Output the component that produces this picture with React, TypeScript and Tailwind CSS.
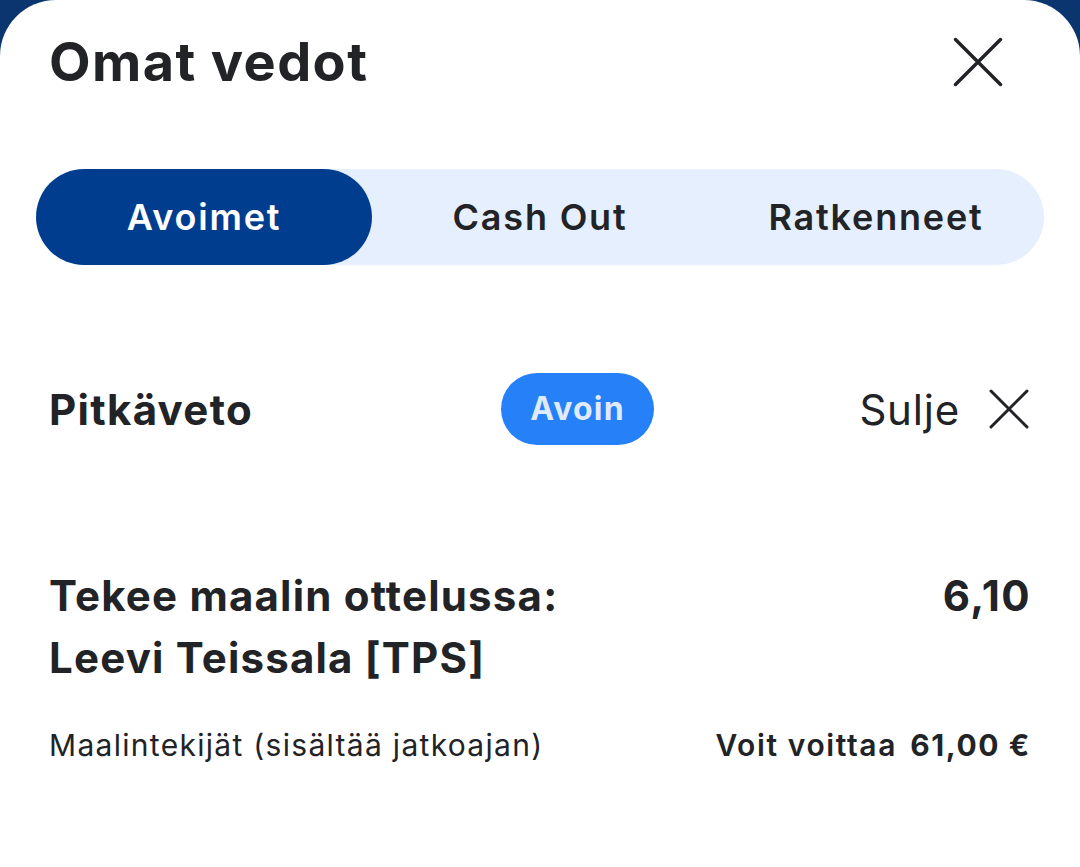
const tabs = ["Avoimet", "Cash Out", "Ratkenneet"];

const CloseIcon = ({ size, stroke }: { size: number; stroke: number }) => (
  <svg width={size} height={size} viewBox={`0 0 ${size} ${size}`} fill="none">
    <path
      d={`M${stroke} ${stroke}L${size - stroke} ${size - stroke}M${size - stroke} ${stroke}L${stroke} ${size - stroke}`}
      stroke="#222327"
      strokeWidth={stroke}
      strokeLinecap="round"
    />
  </svg>
);

const BetSheet = () => {
  return (
    <div className="min-h-[867px] w-[1080px] bg-[#0b356f] font-['Inter',sans-serif] text-[#222327]">
      <div className="min-h-[867px] rounded-t-[56px] bg-white">
        {/* header */}
        <div className="flex items-center justify-between pl-[49px] pr-[76px] pt-[24px]">
          <h1 className="text-[54px] font-bold leading-[76px] tracking-[1.4px]">Omat vedot</h1>
          <CloseIcon size={52} stroke={3.5} />
        </div>

        {/* tabs */}
        <div className="mx-[36px] mt-[69px] grid grid-cols-3 rounded-full bg-[#e5effd]">
          {tabs.map((tab, i) => (
            <div
              key={tab}
              className={`flex h-[96px] items-center justify-center rounded-full text-[36px] font-semibold tracking-[1.8px] ${
                i === 0 ? "bg-[#003d8f] text-white" : "text-[#222327]"
              }`}
            >
              {tab}
            </div>
          ))}
        </div>

        {/* bet type row */}
        <div className="mt-[108px] flex items-center pl-[49px] pr-[50px]">
          <p className="w-[452px] text-[42px] font-bold tracking-[1.3px]">Pitkäveto</p>
          <span className="flex h-[72px] w-[153px] items-center justify-center rounded-full bg-[#2680f8] text-[32px] font-bold tracking-[1.2px] text-[#dfeafc]">
            Avoin
          </span>
          <div className="ml-auto flex items-center gap-[28px]">
            <span className="text-[42px] tracking-[0.8px]">Sulje</span>
            <CloseIcon size={42} stroke={3} />
          </div>
        </div>

        {/* selection */}
        <div className="mt-[120px] flex items-start justify-between px-[49px]">
          <p className="text-[42px] font-bold leading-[62px] tracking-[1.2px]">
            Tekee maalin ottelussa:
            <br />
            Leevi Teissala [TPS]
          </p>
          <p className="text-[42px] font-bold leading-[62px] tracking-[1.4px]">6,10</p>
        </div>

        <div className="mt-[34px] flex items-center justify-between px-[49px]">
          <p className="text-[30px] tracking-[1.3px]">Maalintekijät (sisältää jatkoajan)</p>
          <p className="text-[30px] font-semibold tracking-[1.6px]">
            Voit voittaa <span className="ml-[4px] font-bold">61,00 €</span>
          </p>
        </div>
      </div>
    </div>
  );
};

export default function App() {
  return <BetSheet />;
}
